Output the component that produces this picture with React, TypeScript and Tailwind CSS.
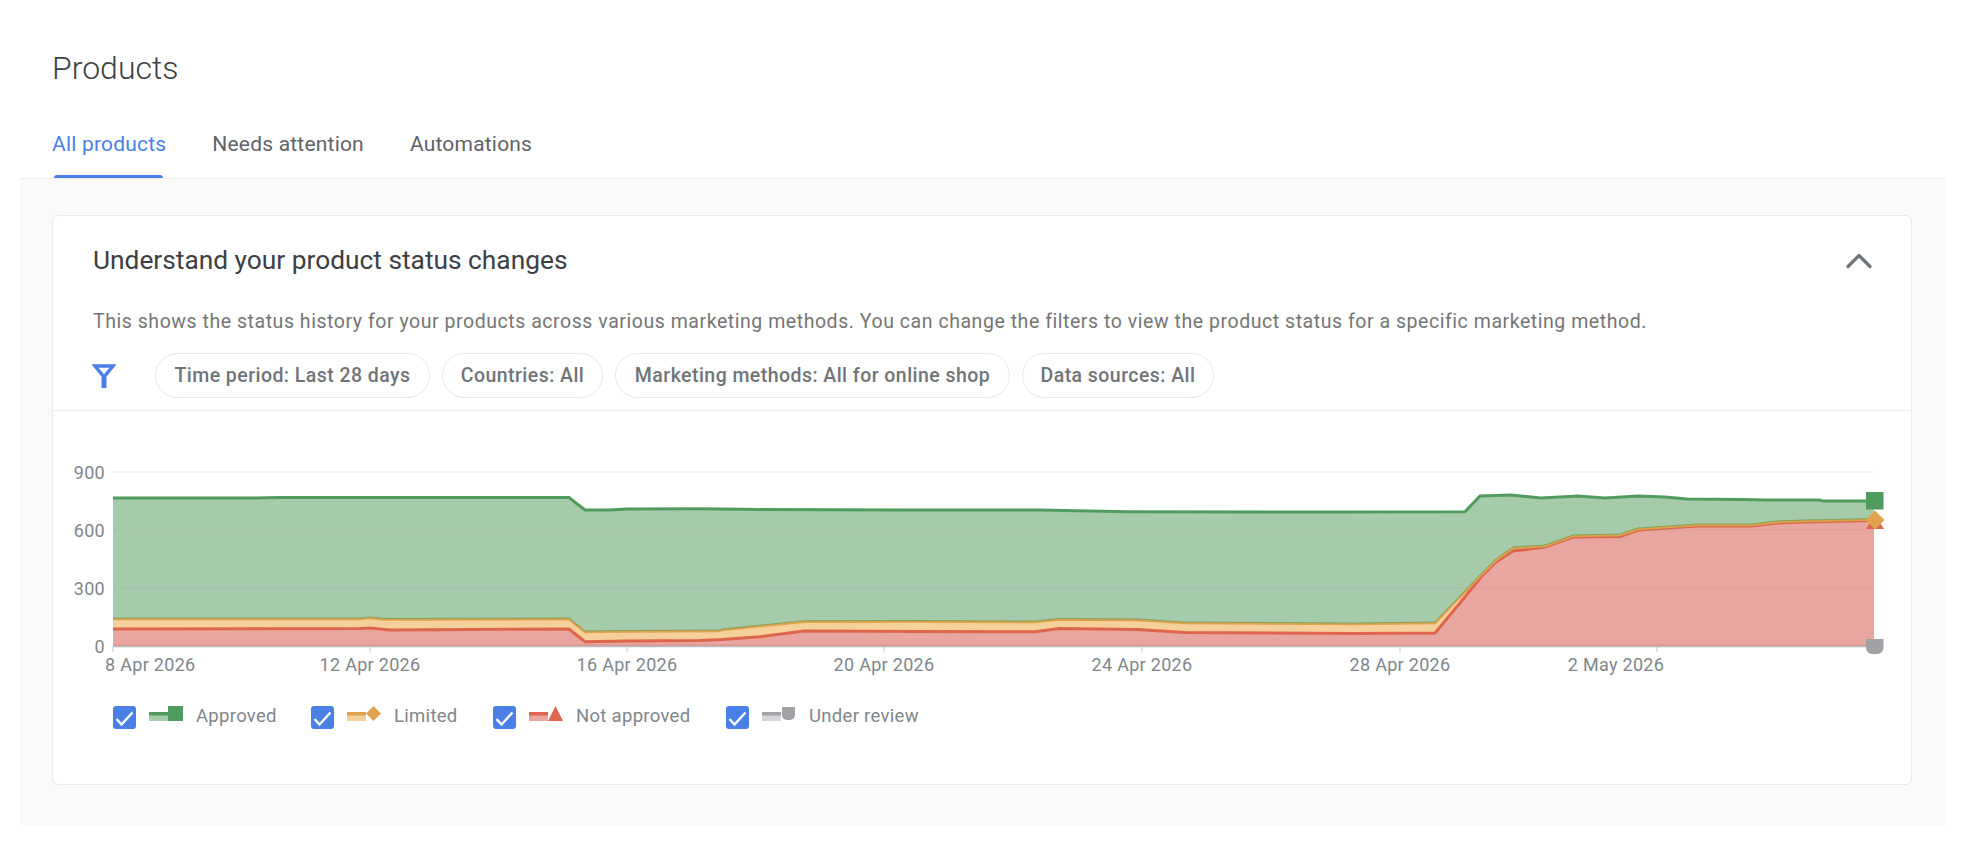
import { ChevronUp } from "lucide-react";

type Point = [number, number];

const X_MIN = 113;
const X_MAX = 1874;
const BASE_Y = 646;

// chart series, traced as [x, y] in page pixels
const APPROVED: Point[] = [
  [113, 498], [250, 498], [280, 497.5], [370, 497.5], [569, 497.5], [585, 510], [610, 510], [627, 509], [700, 508.7], [760, 509.5],
  [900, 510], [1040, 510], [1127, 511.7], [1300, 512], [1465, 511.7], [1480, 496], [1511, 495], [1541, 498], [1578, 496],
  [1605, 498], [1638, 496], [1665, 497], [1687, 499], [1740, 499.5], [1766, 500], [1820, 500], [1822, 501], [1874, 501],
];
const LIMITED: Point[] = [
  [113, 619], [360, 619], [370, 618], [385, 619.5], [569, 619], [585, 632], [627, 631.5], [718, 631], [722, 630], [804, 621.7],
  [918, 621.5], [1035, 622], [1059, 619.5], [1137, 620], [1185, 623], [1355, 624], [1435, 623], [1481, 575], [1496, 560],
  [1513, 548], [1545, 546], [1573, 536], [1620, 535], [1638, 529], [1698, 525], [1751, 525], [1777, 522], [1803, 521], [1874, 519.5],
];
const NOT_APPROVED: Point[] = [
  [113, 629], [360, 628.5], [370, 628], [390, 630], [569, 629], [585, 641.7], [627, 641], [700, 640.5], [722, 639.5], [760, 636.7], [804, 631],
  [918, 631.5], [1035, 631.7], [1059, 628.5], [1137, 629.5], [1185, 632.5], [1355, 633.5], [1435, 633], [1460, 603], [1481, 577],
  [1496, 562], [1513, 551], [1545, 547], [1573, 537], [1620, 536.5], [1638, 530], [1698, 526], [1751, 526], [1777, 523], [1803, 522], [1874, 520.5],
];

const linePath = (pts: Point[]) => pts.map(([x, y], i) => `${i === 0 ? "M" : "L"}${x} ${y}`).join(" ");
const areaBetween = (top: Point[], bottom: Point[]) =>
  `${linePath(top)} ${[...bottom].reverse().map(([x, y]) => `L${x} ${y}`).join(" ")} Z`;

const BASELINE: Point[] = [[X_MIN, BASE_Y], [X_MAX, BASE_Y]];

const Y_TICKS = [
  { label: "900", y: 472 },
  { label: "600", y: 530 },
  { label: "300", y: 588 },
  { label: "0", y: 646 },
];
// the last label sits left of its tick in the picture, so it has its own x
const X_TICKS = [
  { label: "12 Apr 2026", x: 370, labelX: 370 },
  { label: "16 Apr 2026", x: 627, labelX: 627 },
  { label: "20 Apr 2026", x: 884, labelX: 884 },
  { label: "24 Apr 2026", x: 1142, labelX: 1142 },
  { label: "28 Apr 2026", x: 1400, labelX: 1400 },
  { label: "2 May 2026", x: 1657, labelX: 1616 },
];

const AXIS_FONT = { fontSize: 18, fill: "#80868b", fontFamily: "Roboto, sans-serif", letterSpacing: 0.3 };

function Chart() {
  // viewBox keeps page coordinates so the traced numbers can be read directly
  return (
    <svg viewBox="53 411 1858 269" className="block h-[269px] w-[1858px]">
      {Y_TICKS.map((t) => (
        <g key={t.label}>
          <line x1={X_MIN} x2={X_MAX} y1={t.y} y2={t.y} stroke="#eeeeee" strokeWidth={1.5} />
          <text x={105} y={t.y + 6.5} textAnchor="end" {...AXIS_FONT}>
            {t.label}
          </text>
        </g>
      ))}

      <path d={areaBetween(APPROVED, LIMITED)} fill="#a6cbab" />
      <path d={areaBetween(LIMITED, NOT_APPROVED)} fill="#f5d09b" />
      <path d={areaBetween(NOT_APPROVED, BASELINE)} fill="#e9a5a0" />

      <line x1={X_MIN} x2={X_MAX} y1={530} y2={530} stroke="#000000" strokeOpacity={0.025} strokeWidth={1.5} />
      <line x1={X_MIN} x2={X_MAX} y1={588} y2={588} stroke="#000000" strokeOpacity={0.025} strokeWidth={1.5} />

      <path d={linePath(APPROVED)} fill="none" stroke="#509c5f" strokeWidth={3} />
      <path d={linePath(NOT_APPROVED)} fill="none" stroke="#dd664c" strokeWidth={3} />
      <path d={linePath(LIMITED)} fill="none" stroke="#dfa24c" strokeWidth={2.5} />
      <path d={linePath(LIMITED)} fill="none" stroke="#509c5f" strokeWidth={1} strokeOpacity={0.6} transform="translate(0 -1)" />
      <line x1={X_MIN} x2={X_MAX} y1={645} y2={645} stroke="#dd8a80" strokeWidth={1} />
      <line x1={X_MIN} x2={X_MAX} y1={646.5} y2={646.5} stroke="#b9bbbf" strokeWidth={1.5} />

      <line x1={113} x2={113} y1={646} y2={652} stroke="#c4c7c9" />
      {X_TICKS.map((t) => (
        <g key={t.label}>
          <line x1={t.x} x2={t.x} y1={647} y2={652} stroke="#c4c7c9" />
          <text x={t.labelX} y={671} textAnchor="middle" {...AXIS_FONT}>
            {t.label}
          </text>
        </g>
      ))}
      <text x={105} y={671} {...AXIS_FONT}>
        8 Apr 2026
      </text>

      {/* end of line markers */}
      <path d="M1875 515 L1884 529 L1866 529 Z" fill="#dd664c" />
      <rect x={1866} y={492} width={17.5} height={17.5} fill="#509c5f" />
      <path d="M1875 510.5 L1884.5 520 L1875 529.5 L1865.5 520 Z" fill="#e0a24e" />
      <path d="M1866 639 H1883.5 V648 A6 6 0 0 1 1877.5 654 H1872 A6 6 0 0 1 1866 648 Z" fill="#a0a2a6" />
    </svg>
  );
}

type LegendItem = {
  label: string;
  line: string;
  fill: string;
  marker: "square" | "diamond" | "triangle" | "shield";
  w: string;
};

const LEGEND: LegendItem[] = [
  { label: "Approved", line: "#509c5f", fill: "#a6cbab", marker: "square", w: "w-[198px]" },
  { label: "Limited", line: "#e0a24e", fill: "#f5d09b", marker: "diamond", w: "w-[182px]" },
  { label: "Not approved", line: "#dd664c", fill: "#e9a5a0", marker: "triangle", w: "w-[233px]" },
  { label: "Under review", line: "#a0a2a6", fill: "#d5d7d9", marker: "shield", w: "w-[200px]" },
];

function Swatch({ item }: { item: LegendItem }) {
  return (
    <svg width="34" height="16" viewBox="0 0 34 16" className="shrink-0">
      <rect x="0" y="6" width="19" height="9" fill={item.fill} />
      <rect x="0" y="6" width="19" height="3.5" fill={item.line} />
      {item.marker === "square" && <rect x="19" y="0" width="15" height="15" fill={item.line} />}
      {item.marker === "diamond" && <path d="M26.5 0 L34 7.5 L26.5 15 L19 7.5 Z" fill={item.line} />}
      {item.marker === "triangle" && <path d="M26.5 0 L34 15 L19 15 Z" fill={item.line} />}
      {item.marker === "shield" && <path d="M20 1 H33 V9 A5 5 0 0 1 28 14 H25 A5 5 0 0 1 20 9 Z" fill={item.line} />}
    </svg>
  );
}

function Checkbox() {
  return (
    <span className="flex h-[23px] w-[23px] shrink-0 items-center justify-center rounded-[3px] bg-[#4a80e6]">
      <svg width="23" height="23" viewBox="0 0 23 23" fill="none">
        <path d="M3.5 13 L8.5 18.5 L19.5 6.5" stroke="#ffffff" strokeWidth="2.4" />
      </svg>
    </span>
  );
}

const CHIPS = [
  { label: "Time period: Last 28 days", w: "w-[275px]" },
  { label: "Countries: All", w: "w-[161px]" },
  { label: "Marketing methods: All for online shop", w: "w-[395px]" },
  { label: "Data sources: All", w: "w-[192px]" },
];

export default function App() {
  return (
    <div className="h-[858px] w-[1966px] overflow-hidden bg-white font-['Roboto',sans-serif]">
      <div className="pl-[52px] pt-[48px]">
        <h1 className="h-[40px] text-[32px] leading-[40px] font-light text-[#3c4043]">Products</h1>
        <div className="mt-[39px] flex h-[51px] gap-[46px] text-[21px] leading-[35px] tracking-[0.2px] text-[#5f6368]">
          <span className="relative text-[#4a80e6]">
            All products
            <span className="absolute left-[2px] top-[48px] h-[3px] w-[109px] rounded-t-[3px] bg-[#4a80e6]" />
          </span>
          <span>Needs attention</span>
          <span>Automations</span>
        </div>
      </div>

      <div className="ml-[20px] h-[647px] w-[1926px] border-t border-[#eeeeee] bg-[#f9f9f9] px-[32px] pt-[36px]">
        <div className="h-[570px] w-[1860px] rounded-[6px] border border-[#e8eaed] bg-white">
          <div className="flex h-[78px] items-center justify-between pl-[40px] pr-[30px] pt-[12px]">
            <h2 className="text-[26.3px] font-normal text-[#3c4043]">Understand your product status changes</h2>
            <ChevronUp className="h-[44px] w-[44px] text-[#70757a]" strokeWidth={1.75} />
          </div>
          <p className="mt-[13px] pl-[40px] text-[19.5px] leading-[30px] tracking-[0.545px] text-[#757575]">
            This shows the status history for your products across various marketing methods. You can change the filters to view the product status for a specific marketing method.
          </p>
          <div className="mt-[16px] flex h-[45px] items-center pl-[39px]">
            <svg width="24" height="26" viewBox="0 0 24 26" fill="none" className="mr-[39px] shrink-0">
              <path d="M3 3 H21 L12 14 Z" stroke="#4a80e6" strokeWidth="3.5" />
              <path d="M12 14 V25" stroke="#4a80e6" strokeWidth="5" />
            </svg>
            <div className="flex gap-[12px]">
              {CHIPS.map((c) => (
                <span
                  key={c.label}
                  className={`flex h-[45px] ${c.w} items-center justify-center rounded-full border border-[#e6e8ea] text-[19.5px] font-medium tracking-[0.45px] whitespace-nowrap text-[#707478]`}
                >
                  {c.label}
                </span>
              ))}
            </div>
          </div>
          <div className="mt-[12px] border-t border-[#eeeeee]">
            <Chart />
            <div className="flex pl-[60px] pt-[26px]">
              {LEGEND.map((item) => (
                <div key={item.label} className={`flex ${item.w} shrink-0 items-start gap-[13px]`}>
                  <Checkbox />
                  <Swatch item={item} />
                  <span className="text-[18.5px] leading-[20px] tracking-[0.3px] text-[#80868b]">{item.label}</span>
                </div>
              ))}
            </div>
          </div>
        </div>
      </div>
    </div>
  );
}
